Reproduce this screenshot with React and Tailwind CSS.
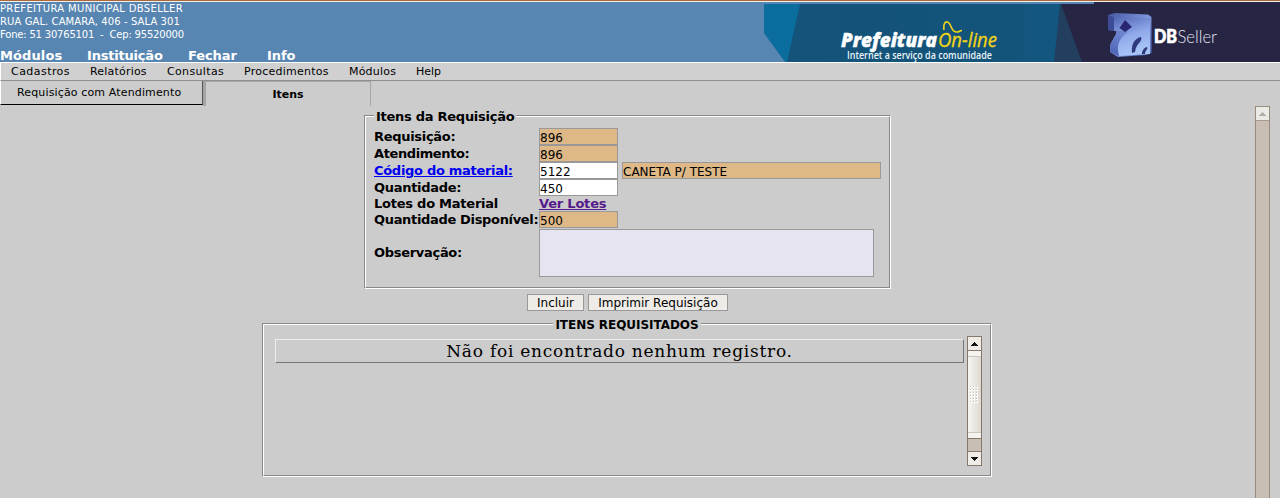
const modules = [
  ["Módulos", "w-[87px] tracking-[0.1px]"],
  ["Instituição", "w-[101px] tracking-[-0.2px]"],
  ["Fechar", "w-[79px] tracking-[-0.1px]"],
  ["Info", "w-[60px] tracking-[-0.1px]"],
];

const menu = [
  ["Cadastros", "w-[79px] tracking-[0.45px]"],
  ["Relatórios", "w-[77px] tracking-[0.2px]"],
  ["Consultas", "w-[77px] tracking-[0.35px]"],
  ["Procedimentos", "w-[105px] tracking-[0.25px]"],
  ["Módulos", "w-[67px] tracking-[0.2px]"],
  ["Help", "w-[60px]"],
];

function Banner() {
  return (
    <svg className="block h-[60px] w-[516px] shrink-0" viewBox="764 2 516 60">
      <defs>
        <linearGradient id="cube" x1="0" y1="0" x2="1" y2="1">
          <stop offset="0" stopColor="#4557a3" />
          <stop offset="0.5" stopColor="#7d95da" />
          <stop offset="1" stopColor="#5268bd" />
        </linearGradient>
        <linearGradient id="face" x1="0" y1="0" x2="0.3" y2="1">
          <stop offset="0" stopColor="#5266b4" />
          <stop offset="0.55" stopColor="#8fa9ea" />
          <stop offset="1" stopColor="#a9c5f6" />
        </linearGradient>
        <linearGradient id="side" x1="0" y1="0" x2="0" y2="1">
          <stop offset="0" stopColor="#6f88d0" />
          <stop offset="1" stopColor="#4c61b4" />
        </linearGradient>
        <linearGradient id="teal" x1="0" y1="0" x2="1" y2="0">
          <stop offset="0" stopColor="#14537a" />
          <stop offset="0.75" stopColor="#13547b" />
          <stop offset="1" stopColor="#135a86" />
        </linearGradient>
      </defs>
      <rect x="764" y="4" width="330" height="58" fill="url(#teal)" />
      <path d="M764 4H800L787 62H784.500L764 33Z" fill="#0a6d9d" />
      <path d="M764 33V62H785Z" fill="#5886b2" />
      <path d="M1060 4L1054 62H1084V4Z" fill="#233f5f" />
      <path d="M1061 4H1094V2H1280V62H1082Z" fill="#262544" />
      <path d="M1108 15L1115 13L1148 14.500L1151.500 17V53L1146 55L1118 57L1110 52L1110.500 44L1116 34V31L1108 30Z" fill="url(#cube)" />
      <path d="M1108 15L1114 17V31L1108 30Z" fill="#3e4c98" />
      <path d="M1114 17L1150 18V54L1119 56C1115 45 1120 38 1129 31L1114 31Z" fill="url(#face)" />
      <path d="M1116 34L1128 31C1119 38 1116 45 1119 56L1110 52L1110.500 44Z" fill="url(#side)" />
      <path d="M1125 20L1132 27L1125 32L1119.500 28Z" fill="#292770" />
      <path d="M1132 53C1131 44 1135 38 1141 37C1143 42 1136 43 1135 52ZM1142 54C1142 50 1145 47 1147 47C1149 49 1145 50 1145 54Z" fill="#2d387d" />
      <g fontFamily="Open Sans, sans-serif">
        <text x="841" y="47" fontSize="20" fontWeight="800" fontStyle="italic" fill="#fff" stroke="#fff" strokeWidth="0.400" textLength="96" lengthAdjust="spacingAndGlyphs">Prefeitura</text>
        <text x="938" y="47" fontSize="20" fontStyle="italic" fill="#f2d516" stroke="#f2d516" strokeWidth="0.300" textLength="59" lengthAdjust="spacingAndGlyphs">On-line</text>
        <text x="847" y="59" fontSize="10.5" fontWeight="600" fill="#e9f3f8" textLength="145" lengthAdjust="spacingAndGlyphs">Internet a serviço da comunidade</text>
      </g>
      <path d="M944 30C943 23 946 20 949 23C952 26 951 32 957 32C960 32 959 30.500 962 30.500" fill="none" stroke="#f2d516" strokeWidth="1.600" />
      <text x="1154" y="43" fontSize="18" fontWeight="900" fontFamily="Lato, sans-serif" fill="#fff" stroke="#fff" strokeWidth="0.700" textLength="23" lengthAdjust="spacingAndGlyphs">DB</text>
      <text x="1177.500" y="43" fontSize="18" fontWeight="300" fontFamily="Lato, sans-serif" fill="#e4e4ef" textLength="39.500" lengthAdjust="spacingAndGlyphs">Seller</text>
    </svg>
  );
}

function Field({ value, tone = "bg-[#deb887]", width = "w-[79px]" }) {
  return (
    <div className={`h-[17px] shrink-0 overflow-hidden whitespace-nowrap border border-[#999] pt-px text-[12px] leading-[16px] ${tone} ${width}`}>
      {value}
    </div>
  );
}

function Row({ label, height, labelClass = "", tracking = "tracking-[-0.3px]", children }) {
  return (
    <div className={`flex ${height}`}>
      <div className={`w-[165px] shrink-0 whitespace-nowrap text-[13px] font-bold ${tracking}`}>
        <span className={labelClass}>{label}</span>
      </div>
      {children}
    </div>
  );
}

function Etched({ title, className, titleClass, children }) {
  return (
    <div className={`border border-[#888] border-r-white border-b-white ${className}`}>
      <div className="flex h-full flex-col border border-white border-r-[#888] border-b-[#888]">
        <div className={`-mt-[8px] flex h-[16px] font-bold leading-[16px] ${titleClass}`}>
          <span className="whitespace-nowrap bg-[#ccc] px-[2px]">{title}</span>
        </div>
        {children}
      </div>
    </div>
  );
}

function Arrow({ down, fill = "#111" }) {
  return (
    <svg className="h-[4px] w-[7px]" viewBox="0 0 7 4" shapeRendering="crispEdges">
      <path d={down ? "M0 0H7V1H6V2H5V3H4V4H3V3H2V2H1V1H0Z" : "M3 0H4V1H5V2H6V3H7V4H0V3H1V2H2V1H3Z"} fill={fill} />
    </svg>
  );
}

function Scrollbar() {
  return (
    <div className="flex h-[130px] w-[15px] flex-col border border-[#85786a] bg-[#c9beb3]">
      <div className="flex h-[13px] items-center justify-center bg-[#f0ede8]"><Arrow /></div>
      <div className="flex h-[89px] flex-col border-y border-[#85786a] bg-linear-to-r from-[#f8f6f3] to-[#ded9d1]">
        <div className="h-[6px] border-b border-[#c9c5bf] bg-[#f5f3f0]" />
        <div className="flex flex-1 items-center justify-center">
          <svg className="h-[18px] w-[9px]" viewBox="0 0 9 18" shapeRendering="crispEdges">
            <defs>
              <pattern id="grip" width="3" height="3" patternUnits="userSpaceOnUse">
                <path d="M0 0H1V1H0Z" fill="#c4beb5" />
                <path d="M1 1H2V2H1ZM1 0H2V1H1ZM0 1H1V2H0Z" fill="#fff" />
              </pattern>
            </defs>
            <rect width="9" height="18" fill="url(#grip)" />
          </svg>
        </div>
        <div className="h-[6px] border-t border-[#c9c5bf] bg-[#f5f3f0]" />
      </div>
      <div className="h-[12px]" />
      <div className="flex flex-1 items-center justify-center border-t border-[#85786a] bg-[#f0ede8]"><Arrow down /></div>
    </div>
  );
}

export default function App() {
  return (
    <div className="flex h-[498px] w-[1280px] flex-col overflow-hidden bg-[#ccc] font-['DejaVu_Sans',sans-serif] text-black">
      <div className="h-[2px] shrink-0 border-b border-[#f5efe8] bg-[#a8693f]" />
      <header className="flex h-[60px] shrink-0 justify-between bg-[#5886b2] text-white">
        <div className="flex flex-col">
          <div className="whitespace-pre text-[10px] leading-[13px]">
            <div className="tracking-[0.34px]">PREFEITURA MUNICIPAL DBSELLER</div>
            <div className="tracking-[0.09px]">RUA GAL. CAMARA, 406 - SALA 301</div>
            <div className="tracking-[-0.19px]">Fone: 51 30765101  -  Cep: 95520000</div>
          </div>
          <nav className="mt-[7px] flex text-[13px] font-bold leading-[16px]">
            {modules.map(([name, style]) => <div key={name} className={style}>{name}</div>)}
          </nav>
        </div>
        <Banner />
      </header>
      <nav className="flex h-[19px] shrink-0 border-y border-t-white border-b-[#909090] border-l border-l-white bg-[#d0d0d0] pl-[10px] text-[11px] leading-[17px]">
        {menu.map(([name, style]) => <div key={name} className={style}>{name}</div>)}
      </nav>
      <div className="flex h-[25px] shrink-0">
        <div className="h-[24px] w-[203px] border-b border-l border-r border-b-black border-l-white border-r-[#555] pl-4 text-[11px] leading-[23px] tracking-[0.14px]">
          Requisição com Atendimento
        </div>
        <div className="w-[168px] border-l-[3px] border-r border-t border-[#a5a5a5] text-center text-[11px] font-bold leading-[25px]">
          Itens
        </div>
      </div>
      <div className="flex min-h-0 flex-1">
        <main className="flex w-[1255px] shrink-0 flex-col items-center pt-[9px]">
          <Etched title="Itens da Requisição" className="h-[174px] w-[527px]" titleClass="pl-[8px] text-[13px] tracking-[-0.27px]">
            <div className="flex flex-col pl-[8px] pt-[3px]">
              <Row label="Requisição:" height="h-[17px] leading-[18px]" tracking="tracking-[-0.3px]"><Field value="896" /></Row>
              <Row label="Atendimento:" height="h-[17px] leading-[18px]" tracking="tracking-[-0.4px]"><Field value="896" /></Row>
              <Row label="Código do material:" height="h-[17px] leading-[18px]" labelClass="text-[#0000ee] underline">
                <div className="flex gap-[4px]">
                  <Field value="5122" tone="bg-white" />
                  <Field value="CANETA P/ TESTE" width="w-[259px]" />
                </div>
              </Row>
              <Row label="Quantidade:" height="h-[17px] leading-[18px]"><Field value="450" tone="bg-white" /></Row>
              <Row label="Lotes do Material" height="h-[15px] leading-[16px]" tracking="tracking-[-0.24px]">
                <span className="text-[13px] font-bold tracking-[-0.2px] text-[#551a8b] underline">Ver Lotes</span>
              </Row>
              <Row label="Quantidade Disponível:" height="h-[18px] leading-[18px]" tracking="tracking-[-0.33px]"><Field value="500" /></Row>
              <Row label="Observação:" height="h-[48px] items-center leading-[16px]">
                <div className="h-[48px] w-[335px] border border-[#999] bg-[#e6e4f0]" />
              </Row>
            </div>
          </Etched>
          <div className="mt-[5px] flex gap-[4px] text-[12px] leading-[17px]">
            <div className="h-[17px] w-[57px] border border-[#999] bg-[#efebe7] text-center">Incluir</div>
            <div className="h-[17px] w-[140px] border border-[#999] bg-[#efebe7] text-center">Imprimir Requisição</div>
          </div>
          <Etched title="ITENS REQUISITADOS" className="mt-[12px] mr-px h-[154px] w-[730px]" titleClass="justify-center text-[12px] tracking-[-0.05px]">
            <div className="mt-[3px] flex pl-[11px]">
              <div className="mt-[3px] mr-[3px] h-[24px] w-[689px] border border-t-[#eee] border-l-[#eee] border-r-[#777] border-b-[#777] text-center font-['DejaVu_Serif',serif] text-[17px] leading-[23px] tracking-[0.75px]">
                Não foi encontrado nenhum registro.
              </div>
              <Scrollbar />
            </div>
          </Etched>
        </main>
        <div className="flex w-[15px] flex-col border border-b-0 border-[#998b7c] bg-[#c9beb3]">
          <div className="flex h-[14px] items-center justify-center border-b border-[#a89b8b] bg-[#eceae5]"><Arrow fill="#b5b0a7" /></div>
        </div>
      </div>
    </div>
  );
}
